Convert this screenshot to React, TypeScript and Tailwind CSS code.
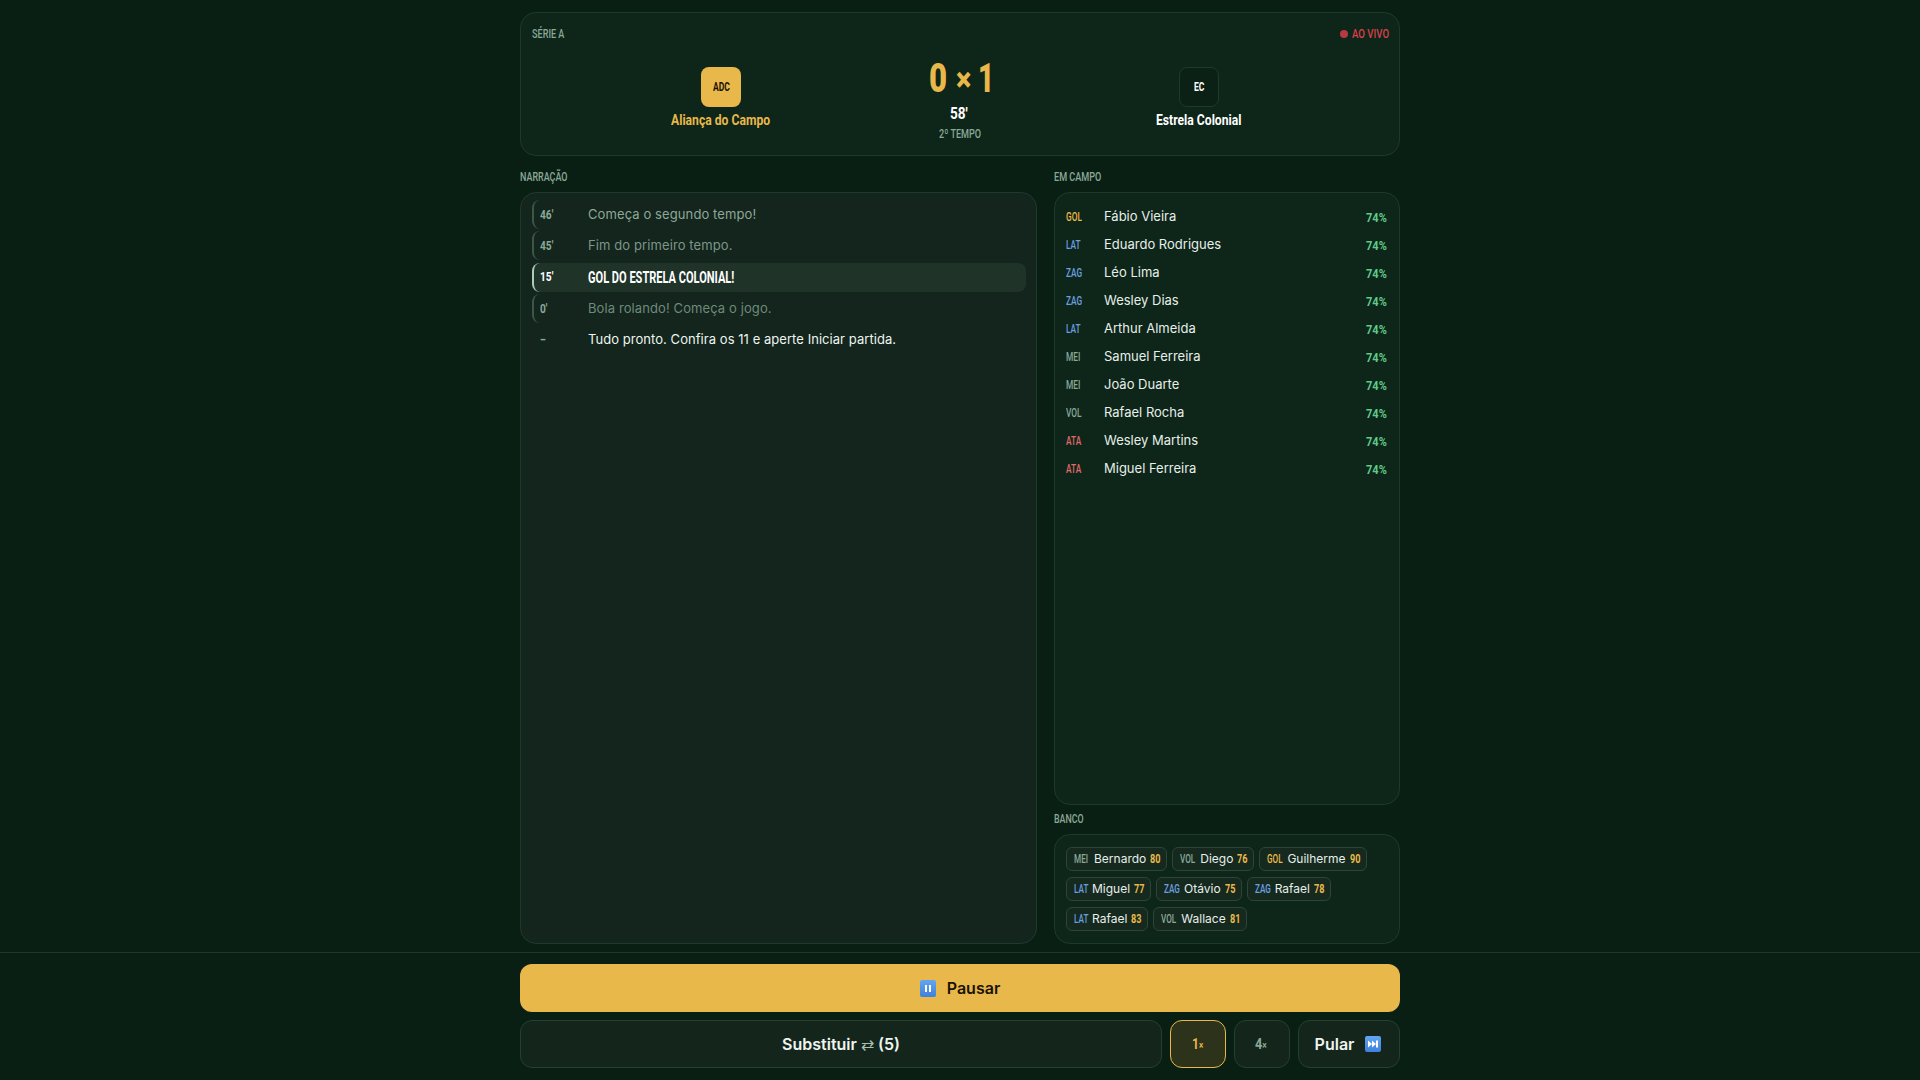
import React from 'react';

const posColor: Record<string, string> = {
  GOL: 'text-[#e8b84a]',
  LAT: 'text-[#6a9fe0]',
  ZAG: 'text-[#6a9fe0]',
  MEI: 'text-[#8aa898]',
  VOL: 'text-[#8aa898]',
  ATA: 'text-[#e06a6a]',
};

const feed = [
  { min: "46'", w: 'w-[13px]', text: 'Começa o segundo tempo!', dim: 'text-[#8fa89a]' },
  { min: "45'", w: 'w-[13px]', text: 'Fim do primeiro tempo.', dim: 'text-[#7d9688]' },
  { min: "15'", w: 'w-[10px]', text: 'GOL DO ESTRELA COLONIAL!', goal: true },
  { min: "0'", w: 'w-[7px]', text: 'Bola rolando! Começa o jogo.', dim: 'text-[#6f8a7b]' },
];

const squad = [
  ['GOL', 'Fábio Vieira'],
  ['LAT', 'Eduardo Rodrigues'],
  ['ZAG', 'Léo Lima'],
  ['ZAG', 'Wesley Dias'],
  ['LAT', 'Arthur Almeida'],
  ['MEI', 'Samuel Ferreira'],
  ['MEI', 'João Duarte'],
  ['VOL', 'Rafael Rocha'],
  ['ATA', 'Wesley Martins'],
  ['ATA', 'Miguel Ferreira'],
];

const bench = [
  ['MEI', 'Bernardo', 80],
  ['VOL', 'Diego', 76],
  ['GOL', 'Guilherme', 90],
  ['LAT', 'Miguel', 77],
  ['ZAG', 'Otávio', 75],
  ['ZAG', 'Rafael', 78],
  ['LAT', 'Rafael', 83],
  ['VOL', 'Wallace', 81],
] as const;

// no condensed family is installed, so narrow Roboto and keep the box at the real width
const Cond = ({ w, s = 'scale-x-[0.7]', className = '', children }: { w: string; s?: string; className?: string; children: React.ReactNode }) => (
  <span className={`inline-flex shrink-0 whitespace-nowrap ${w} ${className}`}>
    <span className={`inline-block origin-left font-['Roboto',sans-serif] ${s}`}>{children}</span>
  </span>
);

const EmojiPause = () => (
  <svg width="16" height="17" viewBox="0 0 16 17">
    <defs>
      <linearGradient id="blue1" x1="0" y1="0" x2="0" y2="1">
        <stop offset="0" stopColor="#62a6f2" />
        <stop offset="1" stopColor="#3f80dc" />
      </linearGradient>
    </defs>
    <rect width="16" height="17" rx="2" fill="url(#blue1)" />
    <rect x="5" y="5" width="2" height="7" fill="#fff" />
    <rect x="9" y="5" width="2" height="7" fill="#fff" />
  </svg>
);

const EmojiSkip = () => (
  <svg width="16" height="16" viewBox="0 0 16 16">
    <defs>
      <linearGradient id="blue2" x1="0" y1="0" x2="0" y2="1">
        <stop offset="0" stopColor="#62a6f2" />
        <stop offset="1" stopColor="#3f80dc" />
      </linearGradient>
    </defs>
    <rect width="16" height="16" rx="2" fill="url(#blue2)" />
    <path d="M3 4.5l4 3.5-4 3.5zM7 4.5l4 3.5-4 3.5z" fill="#fff" />
    <rect x="11" y="4.5" width="2" height="7" fill="#fff" />
  </svg>
);

export default function App() {
  return (
    <div className="h-[1080px] flex flex-col bg-[#0a1f14] text-white font-['Inter',sans-serif] overflow-hidden">
      <div className="flex-1 min-h-0 w-[880px] mx-auto pt-3 pb-[8px] flex flex-col">
        <div className="h-[144px] shrink-0 rounded-2xl border border-[#1c3a2a] bg-[#0e2519] px-3 pt-3 flex flex-col">
          <div className="flex justify-between text-[13px] leading-[18px] text-[#8aa898]">
            <Cond w="w-[32px]" className="font-medium -ml-[1px]">SÉRIE A</Cond>
            <span className="flex items-center gap-[4px] text-[#d9414a]">
              <span className="w-2 h-2 rounded-full bg-[#b53a42]" />
              <Cond w="w-[35px]" s="scale-x-[0.74]" className="font-medium">AO VIVO</Cond>
            </span>
          </div>
          <div className="flex justify-center mt-[10px]">
            <div className="w-[239px] flex flex-col items-center pt-[14px]">
              <div className="w-10 h-10 rounded-lg bg-[#e8b84a] text-[#1a1205] text-[13px] font-bold flex items-center justify-center">
                <Cond w="w-[17px]" s="scale-x-[0.66]">ADC</Cond>
              </div>
              <div className="mt-[3px] text-[15px] leading-5 font-bold text-[#e8b84a]">
                <Cond w="w-[101px]" s="scale-x-[0.81]">Aliança do Campo</Cond>
              </div>
            </div>
            <div className="w-[239px] flex flex-col items-center">
              <div className="flex items-center h-[48px] mt-[2px] text-[40px] leading-[48px] font-black text-[#e8b84a]">
                <Cond w="w-[18px]" s="scale-x-[0.78]">0</Cond>
                <Cond w="w-[14px]" className="ml-[9px] text-[34px]" s="scale-x-[0.85]">×</Cond>
                <Cond w="w-[13px]" className="ml-[8px]" s="scale-x-[0.7]">1</Cond>
              </div>
              <div className="text-[17px] leading-5 font-bold">
                <Cond w="w-[21px]" s="scale-x-[0.8]">58'</Cond>
              </div>
              <div className="text-[13px] leading-[18px] text-[#8aa898] mt-[1px]">
                <Cond w="w-[42px]" s="scale-x-[0.7]" className="font-medium">2º TEMPO</Cond>
              </div>
            </div>
            <div className="w-[239px] flex flex-col items-center pt-[14px]">
              <div className="w-10 h-10 rounded-lg border border-[#1c3a2a] bg-[#0c2116] text-[13px] font-bold flex items-center justify-center">
                <Cond w="w-[10px]" s="scale-x-[0.66]">EC</Cond>
              </div>
              <div className="mt-[3px] text-[15px] leading-5 font-bold">
                <Cond w="w-[86px]" s="scale-x-[0.81]">Estrela Colonial</Cond>
              </div>
            </div>
          </div>
        </div>

        <div className="flex-1 min-h-0 mt-3 grid grid-cols-[517px_346px] gap-[17px]">
          <div className="flex flex-col min-h-0">
            <div className="h-[24px] text-[13px] leading-[17px] text-[#8aa898]">
              <Cond w="w-[47px]" s="scale-x-[0.69]" className="font-medium">NARRAÇÃO</Cond>
            </div>
            <div className="flex-1 rounded-2xl border border-[#1f3a2c] bg-[#13251c] pl-[11px] pr-[10px] pt-[7px] flex flex-col gap-[2.25px]">
              {feed.map(row => (
                <div
                  key={row.min}
                  className={`h-[29px] flex items-center rounded-lg border-l-2 pl-[6px] ${row.goal ? 'border-[#a9cdb8] bg-[#1f3329]' : 'border-[#3c5648]'}`}
                >
                  <span className={`w-[48px] text-[13px] font-bold ${row.goal ? 'text-white' : 'text-[#8aa898]'}`}>
                    <Cond w={row.w} s="scale-x-[0.78]">{row.min}</Cond>
                  </span>
                  {row.goal ? (
                    <span className="text-[16px] font-bold">
                      <Cond w="w-[146px]" s="scale-x-[0.69]">{row.text}</Cond>
                    </span>
                  ) : (
                    <span className={`text-[13px] tracking-[0.1px] ${row.dim}`}>{row.text}</span>
                  )}
                </div>
              ))}
              <div className="h-[29px] flex items-center pl-[8px]">
                <span className="w-[48px] text-[13px] font-bold text-[#8aa898]">
                  <Cond w="w-[7px]">–</Cond>
                </span>
                <span className="text-[13px] tracking-[0.05px] text-[#eef5f0]">Tudo pronto. Confira os 11 e aperte Iniciar partida.</span>
              </div>
            </div>
          </div>

          <div className="flex flex-col min-h-0">
            <div className="h-[24px] text-[13px] leading-[17px] text-[#8aa898]">
              <Cond w="w-[46px]" s="scale-x-[0.7]" className="font-medium">EM CAMPO</Cond>
            </div>
            <div className="flex-1 rounded-2xl border border-[#1c3a2a] bg-[#0e2519] pl-[11px] pr-[12px] pt-[12px] flex flex-col gap-1">
              {squad.map(([pos, name]) => (
                <div key={name} className="h-6 flex items-center">
                  <span className={`w-[38px] text-[13px] font-medium ${posColor[pos]}`}>
                    <Cond w="w-[15px]" s="scale-x-[0.64]">{pos}</Cond>
                  </span>
                  <span className="flex-1 text-[13px] text-[#e6efe9]">{name}</span>
                  <span className="mt-[2px] text-[13px] font-bold text-[#5fc98a]">
                    <Cond w="w-[21px]" s="scale-x-[0.85]">74%</Cond>
                  </span>
                </div>
              ))}
            </div>
            <div className="mt-[5px] h-[24px] text-[13px] leading-[17px] text-[#8aa898]">
              <Cond w="w-[29px]" s="scale-x-[0.68]" className="font-medium">BANCO</Cond>
            </div>
            <div className="h-[110px] shrink-0 rounded-2xl border border-[#1c3a2a] bg-[#0e2519] pl-[11px] pr-3 pt-3 flex flex-wrap content-start gap-x-[5px] gap-y-[6px]">
              {bench.map(([pos, name, ovr]) => (
                <div key={pos + name} className="h-6 flex items-center rounded-md border border-[#2b4638] bg-[#16291f] px-[7px] text-xs">
                  <span className={`text-[12px] font-medium mr-[5px] ${posColor[pos]}`}>
                    <Cond w={pos === 'LAT' ? 'w-[13px]' : 'w-[15px]'} s="scale-x-[0.68]">{pos}</Cond>
                  </span>
                  <span className="text-[#e6efe9] mr-1">{name}</span>
                  <span className="text-[13px] font-bold text-[#e8b84a]">
                    <Cond w="w-[9px]" s="scale-x-[0.7]">{ovr}</Cond>
                  </span>
                </div>
              ))}
            </div>
          </div>
        </div>
      </div>

      <div className="border-t border-[#1c3a2a] pt-[11px] pb-3">
        <div className="w-[880px] mx-auto flex flex-col gap-2">
          <button className="h-12 rounded-xl bg-[#e8b84a] text-[#1a1205] text-base font-semibold flex items-center justify-center gap-[11px]">
            <EmojiPause />
            Pausar
          </button>
          <div className="flex gap-2 h-12">
            <button className="flex-1 rounded-xl border border-[#25402f] bg-[#14251c] font-semibold text-[#eef5f0]">
              Substituir <span className="font-normal text-[#a8bfb1]">⇄</span> (5)
            </button>
            <button className="w-14 rounded-xl border border-[#e8b84a] bg-[#2c331a] text-[#e8b84a] text-[15px] font-bold flex items-center justify-center">
              <Cond w="w-[12px]" s="scale-x-[0.8]">1<span className="text-[10px]">×</span></Cond>
            </button>
            <button className="w-14 rounded-xl border border-[#25402f] bg-[#14251c] text-[#8aa898] text-[15px] font-bold flex items-center justify-center">
              <Cond w="w-[14px]" s="scale-x-[0.85]">4<span className="text-[10px]">×</span></Cond>
            </button>
            <button className="w-[102px] rounded-xl border border-[#25402f] bg-[#14251c] font-semibold text-[#eef5f0] flex items-center justify-center gap-[11px] pr-[2px]">
              Pular
              <EmojiSkip />
            </button>
          </div>
        </div>
      </div>
    </div>
  );
}
